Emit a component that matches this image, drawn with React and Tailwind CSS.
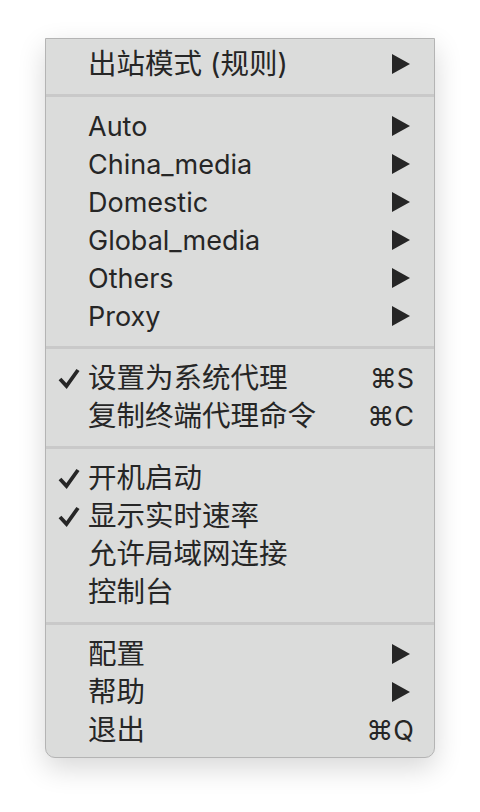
import React from "react";

const groups = [
  [{ label: "出站模式 (规则)", sub: true, cjk: true }],
  [
    { label: "Auto", sub: true },
    { label: "China_media", sub: true },
    { label: "Domestic", sub: true },
    { label: "Global_media", sub: true },
    { label: "Others", sub: true },
    { label: "Proxy", sub: true },
  ],
  [
    { label: "设置为系统代理", checked: true, key: "S", cjk: true },
    { label: "复制终端代理命令", key: "C", cjk: true },
  ],
  [
    { label: "开机启动", checked: true, cjk: true },
    { label: "显示实时速率", checked: true, cjk: true },
    { label: "允许局域网连接", cjk: true },
    { label: "控制台", cjk: true },
  ],
  [
    { label: "配置", sub: true, cjk: true },
    { label: "帮助", sub: true, cjk: true },
    { label: "退出", key: "Q", cjk: true },
  ],
];

function Check() {
  return (
    <svg width="22" height="22" viewBox="0 0 22 22">
      <path
        d="M2 12 L8.5 19 L20 3"
        fill="none"
        stroke="#262626"
        strokeWidth="3.8"
        strokeLinejoin="miter"
      />
    </svg>
  );
}

function Arrow() {
  return (
    <svg width="18" height="20" viewBox="0 0 18 20">
      <polygon points="0,0 18,10 0,20" fill="#262626" />
    </svg>
  );
}

function Row({ item }) {
  return (
    <div className="flex h-[38px] items-center pl-[12px] pr-[24px]">
      <span className="flex w-[30px] items-center">
        {item.checked && <Check />}
      </span>
      <span
        className={
          item.cjk
            ? "flex-1 whitespace-nowrap text-[28.5px]"
            : "flex-1 whitespace-nowrap"
        }
      >
        {item.label}
      </span>
      {item.sub && <Arrow />}
      {item.key && (
        <span className="-mr-[4px] whitespace-nowrap text-[27px]">
          ⌘{item.key}
        </span>
      )}
    </div>
  );
}

export default function App() {
  return (
    <div className="min-h-[812px] bg-white pl-[45px] pt-[38px]">
      <div
        className="w-[390px] rounded-b-[10px] border border-[#b4b4b4] bg-[#dbdcdb] pb-[8px] pt-[6px] text-[27px] leading-none text-[#262626] shadow-[0_10px_28px_rgba(0,0,0,0.16)]"
        style={{ fontFamily: '"Inter", "Noto Sans CJK SC", sans-serif' }}
      >
        {groups.map((group, gi) => (
          <div key={gi}>
            {gi > 0 && (
              <div className="flex h-[24px] items-center">
                <div className="h-[3px] w-full bg-[#c9c9c9]" />
              </div>
            )}
            {group.map((item, i) => (
              <Row item={item} key={i} />
            ))}
          </div>
        ))}
      </div>
    </div>
  );
}
